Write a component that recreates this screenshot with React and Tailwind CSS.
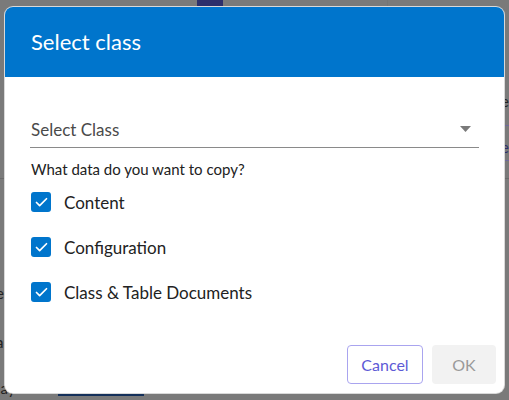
import { Check } from "lucide-react";

const options = ["Content", "Configuration", "Class & Table Documents"];

function Checkbox({ label }) {
  return (
    <label className="flex items-center gap-[13px] h-[20px]">
      <span className="w-[20px] h-[20px] rounded-[3px] bg-[#0075cc] flex items-center justify-center">
        <Check className="w-[15px] h-[15px] text-white" strokeWidth={2.75} />
      </span>
      <span className="text-[17px] text-[#222] leading-none">{label}</span>
    </label>
  );
}

export default function App() {
  return (
    <div
      className="relative w-[509px] h-[400px] overflow-hidden bg-[#7a7a7a]"
      style={{ fontFamily: "Lato, 'Noto Sans', sans-serif" }}
    >
      {/* page behind the overlay */}
      <div className="flex flex-col h-full">
        <div className="flex h-[7px]">
          <div className="w-[197px]" />
          <div className="w-[26px] bg-[#2d2f6b]" />
          <div className="w-[164px]" />
          <div className="w-px bg-[#757575]" />
        </div>
        <div className="flex justify-end mt-[87px]">
          <span className="text-[15px] text-[#222] leading-none">e</span>
        </div>
        <div className="flex justify-end mt-[16px]">
          <div className="w-[8px] h-px bg-[#6f6a9a]" />
        </div>
        <div className="flex justify-end mt-[14px]">
          <span className="text-[15px] text-[#2d2f6b] leading-none">e</span>
        </div>
        <div className="flex justify-end mt-[5px]">
          <div className="w-[8px] h-px bg-[#6f6a9a]" />
        </div>
        <div className="h-px bg-[#6a6a6a] mt-[17px]" />
        <div className="flex mt-[107px]">
          <span className="text-[15px] text-[#222] leading-none -ml-[4px]">e</span>
        </div>
        <div className="flex mt-[34px]">
          <span className="text-[15px] text-[#222] leading-none -ml-[4px]">a</span>
        </div>
        <div className="flex items-end mt-[26px] h-[20px]">
          <span className="text-[15px] text-[#222] leading-none -ml-[8px]">day</span>
          <div className="ml-[43px] w-[86px] h-[10px] bg-[#14305a]" />
        </div>
      </div>

      {/* modal */}
      <div className="absolute left-[5px] top-[7px] w-[499px] h-[386px] rounded-[8px] bg-white overflow-hidden ring-1 ring-[#d9d9d9] flex flex-col">
        <div className="h-[70px] bg-[#0075cc] flex items-center px-[26px]">
          <h2 className="text-[22px] text-white leading-none">Select class</h2>
        </div>
        <div className="flex-1 flex flex-col px-[25px]">
          <div className="mt-[30px] h-[41px] flex items-center justify-between border-b border-[#8a8a8a] pl-[1px] pr-[8px] pt-[4px]">
            <span className="text-[17px] text-[#4a4a4a] leading-none">Select Class</span>
            <svg width="11" height="6" viewBox="0 0 11 6">
              <path d="M0 0h11L5.5 6z" fill="#7a7a7a" />
            </svg>
          </div>
          <p className="mt-[14px] text-[15px] text-[#222] leading-none pl-[1px]">
            What data do you want to copy?
          </p>
          <div className="mt-[15px] flex flex-col gap-[25px] pl-[1px]">
            {options.map((o) => (
              <Checkbox key={o} label={o} />
            ))}
          </div>
          <div className="mt-auto mb-[9px] flex justify-end gap-[9px] -mr-[17px]">
            <button className="w-[76px] h-[39px] rounded-[4px] border border-[#a9a4ef] text-[#5d5ad6] text-[16px]">
              Cancel
            </button>
            <button className="w-[64px] h-[39px] rounded-[4px] bg-[#f2f2f2] text-[#9a9a9a] text-[16px]">
              OK
            </button>
          </div>
        </div>
      </div>
    </div>
  );
}
